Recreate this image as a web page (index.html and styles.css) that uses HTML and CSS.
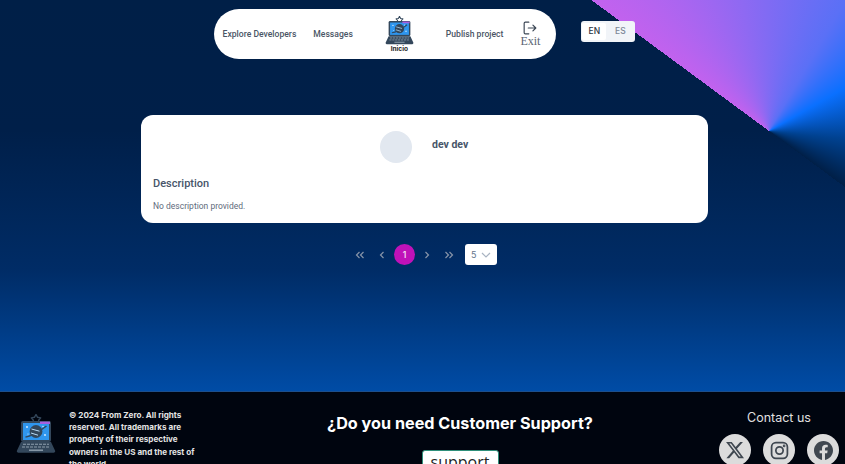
FILE: index.html
```html
<!DOCTYPE html>
<html lang="en">
<head>
  <meta charset="UTF-8" />
  <meta name="viewport" content="width=device-width, initial-scale=1.0"/>
  <title>From Zero</title>
  <link rel="stylesheet" href="styles.css">
</head>
<body>
  <svg class="defs" width="0" height="0">
    <symbol id="logo" viewBox="0 0 40 40">
      <path d="M20 0.5l1.6 2.8 3.1 0.6-2.1 2.3 0.4 3.1-3-1.3-3 1.3 0.4-3.1-2.1-2.3 3.1-0.6z" fill="none" stroke="#33475b" stroke-width="1.4" stroke-linejoin="round"/>
      <rect x="5" y="7" width="30" height="21" rx="2" fill="#33475b"/>
      <rect x="7" y="9" width="26" height="17" fill="#2f96ee"/>
      <rect x="24" y="7.6" width="10" height="2.4" fill="#a65fe0"/>
      <circle cx="20" cy="17.5" r="6.4" fill="#33475b"/>
      <path d="M9.5 23C15 22.5 26 15.5 30.5 12" fill="none" stroke="#33475b" stroke-width="1.5"/>
      <path d="M15.5 15l8 2.2M15 19l7 2.2" stroke="#b9dcf7" stroke-width="1"/>
      <circle cx="11" cy="13" r="0.9" fill="#dff0ff"/>
      <circle cx="29" cy="21" r="0.9" fill="#dff0ff"/>
      <circle cx="27" cy="12.5" r="0.7" fill="#dff0ff"/>
      <circle cx="12" cy="20" r="0.6" fill="#dff0ff"/>
      <path d="M5 28h30l4 8.5a1.6 1.6 0 0 1-1.5 2.3h-35a1.6 1.6 0 0 1-1.5-2.3z" fill="#33475b"/>
      <path d="M7 30.3h26M6 33h28" stroke="#8fa0ae" stroke-width="1.1" stroke-dasharray="3 1"/>
      <rect x="13" y="35.5" width="14" height="1.4" fill="#8fa0ae"/>
    </symbol>
  </svg>

  <div class="page">
    <div class="decor"></div>

    <header class="header">
      <nav class="nav">
        <a href="#">Explore Developers</a>
        <a href="#">Messages</a>
        <a href="#" class="nav-logo">
          <svg width="29" height="29"><use href="#logo"/></svg>
          <span>Inicio</span>
        </a>
        <a href="#">Publish project</a>
        <a href="#" class="nav-exit">
          <svg width="14" height="14" viewBox="0 0 24 24" fill="none" stroke="#3b4654" stroke-width="2" stroke-linecap="round" stroke-linejoin="round">
            <path d="M10 2H4a2 2 0 0 0-2 2v16a2 2 0 0 0 2 2h6"/>
            <path d="M9 12h13M17 7l5 5-5 5"/>
          </svg>
          <span>Exit</span>
        </a>
      </nav>
      <div class="lang">
        <span class="lang-item active">EN</span>
        <span class="lang-item">ES</span>
      </div>
    </header>

    <main>
      <section class="card">
        <div class="profile">
          <div class="avatar"></div>
          <h2>dev dev</h2>
        </div>
        <h3>Description</h3>
        <p>No description provided.</p>
      </section>

      <div class="pagination">
        <button type="button" class="page-btn">
          <svg width="10" height="10" viewBox="0 0 10 10"><path d="M4.5 2L1.5 5l3 3M8.5 2l-3 3 3 3"/></svg>
        </button>
        <button type="button" class="page-btn">
          <svg width="10" height="10" viewBox="0 0 10 10"><path d="M6.5 2l-3 3 3 3"/></svg>
        </button>
        <button type="button" class="page-num">1</button>
        <button type="button" class="page-btn">
          <svg width="10" height="10" viewBox="0 0 10 10"><path d="M3.5 2l3 3-3 3"/></svg>
        </button>
        <button type="button" class="page-btn">
          <svg width="10" height="10" viewBox="0 0 10 10"><path d="M1.5 2l3 3-3 3M5.5 2l3 3-3 3"/></svg>
        </button>
        <div class="page-size">
          <span>5</span>
          <svg width="10" height="10" viewBox="0 0 10 10"><path d="M1 3l4 4 4-4"/></svg>
        </div>
      </div>
    </main>
  </div>

  <footer class="footer">
    <div class="footer-left">
      <svg width="40" height="40"><use href="#logo"/></svg>
      <p>© 2024 From Zero. All rights reserved. All trademarks are property of their respective owners in the US and the rest of the world.</p>
    </div>
    <div class="footer-middle">
      <h2>¿Do you need Customer Support?</h2>
      <button type="button">support</button>
    </div>
    <div class="footer-right">
      <h4>Contact us</h4>
      <div class="socials">
        <a href="#">
          <svg width="20" height="20" viewBox="0 0 24 24" fill="#3f4750"><path d="M18.244 2.25h3.308l-7.227 8.26 8.502 11.24H16.17l-5.214-6.817L4.99 21.75H1.68l7.73-8.835L1.254 2.25H8.08l4.713 6.231zm-1.161 17.52h1.833L7.084 4.126H5.117z"/></svg>
        </a>
        <a href="#">
          <svg width="19" height="19" viewBox="0 0 24 24" fill="none" stroke="#3f4750" stroke-width="2.2"><rect x="2" y="2" width="20" height="20" rx="5.5"/><circle cx="12" cy="12" r="4.6"/><circle cx="17.8" cy="6.2" r="0.6"/></svg>
        </a>
        <a href="#">
          <svg width="19" height="19" viewBox="0 0 24 24" fill="#3f4750"><path d="M24 12.073c0-6.627-5.373-12-12-12s-12 5.373-12 12c0 5.99 4.388 10.954 10.125 11.854v-8.385H7.078v-3.47h3.047V9.43c0-3.007 1.792-4.669 4.533-4.669 1.312 0 2.686.235 2.686.235v2.953H15.83c-1.491 0-1.956.925-1.956 1.874v2.25h3.328l-.532 3.47h-2.796v8.385C19.612 23.027 24 18.062 24 12.073z"/></svg>
        </a>
      </div>
    </div>
  </footer>
</body>
</html>
```

FILE: styles.css
```css
html, body {
  margin: 0;
  height: 464px;
  overflow: hidden;
}

body {
  font-family: "Inter", sans-serif;
  background: #00050f;
}

a {
  color: inherit;
  text-decoration: none;
}

.defs {
  position: absolute;
}

.page {
  position: relative;
  height: 391px;
  padding: 9px 0 0 4px;
  box-sizing: border-box;
  overflow: hidden;
  background: linear-gradient(180deg, #001f47 0, #001f49 130px, #002c66 270px, #004ca6 391px);
}

.decor {
  position: absolute;
  top: 0;
  left: 0;
  right: 0;
  bottom: 0;
  background: conic-gradient(from 306.4deg at 769px 131px,
    #c262ee 0deg,
    #5a70f6 84deg,
    #0a70ff 114deg,
    #00418f 150deg,
    #001f47 180deg,
    transparent 180deg);
}

.header {
  position: relative;
  display: flex;
  justify-content: center;
  align-items: flex-start;
  gap: 25px;
}

.nav {
  display: flex;
  align-items: center;
  height: 50px;
  padding: 0 16px 0 9px;
  gap: 17px;
  background: #fff;
  border-radius: 25px;
  font-family: "Roboto", sans-serif;
  font-size: 8.6px;
  font-weight: 500;
  color: #4a5565;
  white-space: nowrap;
}

.nav-logo {
  display: flex;
  flex-direction: column;
  align-items: center;
  margin: 0 15px;
  width: 29px;
  font-family: "Inter", sans-serif;
  font-size: 6.5px;
  line-height: 8px;
  font-weight: 700;
  color: #222;
}

.nav-logo svg {
  display: block;
}

.nav-exit {
  display: flex;
  flex-direction: column;
  align-items: center;
  font-family: "Liberation Serif", serif;
  font-size: 12px;
  font-weight: 400;
  line-height: 12px;
  color: #5a6472;
}

.lang {
  display: flex;
  margin-top: 12px;
  padding: 2px 1px;
  background: #f1f4f8;
  border-radius: 3px;
  font-size: 8.5px;
  font-weight: 500;
}

.lang-item {
  width: 28px;
  height: 17px;
  line-height: 17px;
  text-align: center;
  color: #7b8696;
}

.lang-item.active {
  width: 24px;
  background: #fff;
  border-radius: 2px;
  color: #2b3340;
}

.card {
  position: relative;
  width: 567px;
  height: 108px;
  margin: 56px auto 0;
  padding: 16px 12px 0;
  box-sizing: border-box;
  background: #fff;
  border-radius: 12px;
}

.profile {
  display: flex;
  align-items: flex-start;
  height: 32px;
  padding-left: 227px;
  gap: 20px;
}

.avatar {
  width: 32px;
  height: 32px;
  border-radius: 50%;
  background: #e2e8f0;
}

.profile h2 {
  margin: 7px 0 0;
  font-family: "Roboto", sans-serif;
  font-size: 10.5px;
  line-height: 14px;
  font-weight: 700;
  color: #475569;
}

.card h3 {
  margin: 13px 0 0;
  font-family: "Roboto", sans-serif;
  font-size: 11px;
  line-height: 15px;
  font-weight: 500;
  color: #475569;
}

.card p {
  margin: 9px 0 0;
  font-family: "Roboto", sans-serif;
  font-size: 8.5px;
  line-height: 12px;
  color: #5f6b7c;
}

.pagination {
  position: relative;
  display: flex;
  justify-content: center;
  align-items: center;
  margin-top: 21px;
  padding-right: 3px;
}

.page-btn {
  display: flex;
  align-items: center;
  justify-content: center;
  width: 22px;
  height: 21px;
  padding: 0;
  border: none;
  background: none;
}

.page-btn svg path,
.page-size svg path {
  fill: none;
  stroke: #8593a8;
  stroke-width: 1.2;
}

.page-num {
  width: 21px;
  height: 21px;
  margin: 0 1px;
  padding: 0;
  border: none;
  border-radius: 50%;
  background: #c012b8;
  color: #f3d8f2;
  font-family: inherit;
  font-size: 8.5px;
  font-weight: 600;
}

.page-size {
  display: flex;
  align-items: center;
  justify-content: space-between;
  width: 32px;
  height: 21px;
  margin-left: 5px;
  padding: 0 6px;
  box-sizing: border-box;
  background: #fff;
  border-radius: 3px;
  font-size: 9px;
  color: #64748b;
}

.page-size svg path {
  stroke: #a9b4c2;
}

.footer {
  position: relative;
  display: flex;
  height: 72px;
  border-top: 1px solid #1d4f8c;
  color: #fff;
  overflow: hidden;
}

.footer-left {
  display: flex;
  width: 206px;
  padding-left: 16px;
  gap: 13px;
  box-sizing: border-box;
}

.footer-left svg {
  flex: none;
  margin-top: 22px;
}

.footer-left p {
  margin: 17px 0 0;
  width: 130px;
  font-size: 8.1px;
  line-height: 12.2px;
  font-weight: 700;
  color: #e4e4e4;
}

.footer-middle {
  display: flex;
  flex-direction: column;
  align-items: center;
  width: 508px;
}

.footer-middle h2 {
  margin: 20px 0 0;
  font-size: 16.2px;
  line-height: 22px;
  font-weight: 700;
  white-space: nowrap;
}

.footer-middle button {
  width: 77px;
  height: 34px;
  margin-top: 16px;
  padding: 0;
  border: 1px solid #2e8f7a;
  border-radius: 3px;
  background: #fff;
  color: #222;
  font-family: "Open Sans", sans-serif;
  font-size: 16px;
  line-height: 22px;
}

.footer-right {
  flex: 1;
  display: flex;
  flex-direction: column;
  align-items: center;
  padding-right: 1px;
}

.footer-right h4 {
  margin: 17px 0 0;
  font-size: 12.5px;
  line-height: 18px;
  font-weight: 400;
  color: #e0e0e0;
}

.socials {
  display: flex;
  gap: 12px;
  margin-top: 7px;
}

.socials a {
  display: flex;
  align-items: center;
  justify-content: center;
  width: 32px;
  height: 32px;
  border-radius: 50%;
  background: #dcdcdc;
}
```
